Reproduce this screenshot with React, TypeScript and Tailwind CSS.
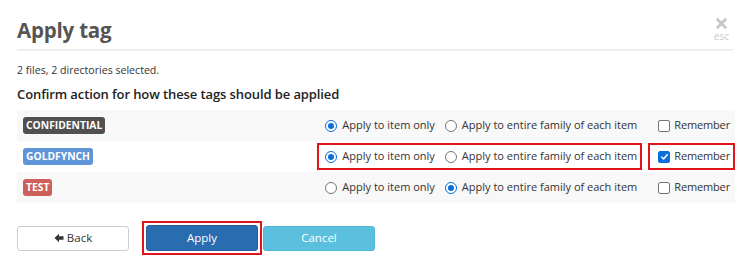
import { useState } from 'react';

type Row = {
  name: string;
  color: string;
  scope: 'item' | 'family';
  remember: boolean;
  highlight?: boolean;
};

const initialRows: Row[] = [
  { name: 'CONFIDENTIAL', color: 'bg-[#505050]', scope: 'item', remember: false },
  { name: 'GOLDFYNCH', color: 'bg-[#5f94d6]', scope: 'item', remember: true, highlight: true },
  { name: 'TEST', color: 'bg-[#cd605a]', scope: 'family', remember: false },
];

const Radio = ({ checked }: { checked: boolean }) => (
  <span
    className={`inline-flex items-center justify-center w-[12px] h-[12px] rounded-full border ${
      checked ? 'border-[#0a6fd8]' : 'border-[#767676]'
    } bg-white`}
  >
    {checked && <span className="w-[6px] h-[6px] rounded-full bg-[#0a6fd8]" />}
  </span>
);

const Checkbox = ({ checked }: { checked: boolean }) => (
  <span
    className={`inline-flex items-center justify-center w-[12px] h-[12px] rounded-[2px] border ${
      checked ? 'border-[#0a6fd8] bg-[#0a6fd8]' : 'border-[#767676] bg-white'
    }`}
  >
    {checked && (
      <svg width="9" height="9" viewBox="0 0 10 10">
        <path d="M1.5 5.2 L4 7.6 L8.6 2.4" fill="none" stroke="white" strokeWidth="1.6" />
      </svg>
    )}
  </span>
);

export default function App() {
  const [rows] = useState(initialRows);

  return (
    <div
      className="w-[750px] h-[266px] bg-white px-[17px] text-[#333]"
      style={{ fontFamily: '"Open Sans", "Liberation Sans", sans-serif' }}
    >
      {/* header */}
      <div className="flex justify-between items-start border-b-2 border-[#eeeeee] h-[51px] pt-[15px]">
        <h3 className="text-[20.5px] font-bold text-[#555] leading-[30px] tracking-[-0.2px]">Apply tag</h3>
        <div className="flex flex-col items-center mr-[4px] mt-[3px] text-[#c8c8c8]">
          <svg width="11" height="11" viewBox="0 0 12 12">
            <path d="M2 2 L10 10 M10 2 L2 10" stroke="#c8c8c8" strokeWidth="3.2" strokeLinecap="square" />
          </svg>
          <span className="text-[10px] leading-[12px] mt-[1px]">esc</span>
        </div>
      </div>

      <p className="text-[10.6px] mt-[12px] leading-[14px]">2 files, 2 directories selected.</p>
      <p className="text-[13px] font-semibold mt-[8px] leading-[18px] text-[#222] tracking-[-0.1px]">
        Confirm action for how these tags should be applied
      </p>

      {/* tag table */}
      <div className="mt-[7px] w-[718px] text-[11px]">
        {rows.map((row, i) => (
          <div
            key={row.name}
            className={`flex items-center h-[31px] pl-[6px] ${i % 2 === 0 ? 'bg-[#f8f8f8]' : 'bg-white'}`}
          >
            <span
              className={`${row.color} text-white text-[10.3px] font-bold leading-[13px] px-[3px] py-[2px] rounded-[3px]`}
            >
              {row.name}
            </span>
            <div className="flex-1" />
            <div
              className={`flex items-center h-[27px] pl-[6px] pr-[3px] border-2 ${
                row.highlight ? 'border-[#e0131e]' : 'border-transparent'
              }`}
            >
              <label className="flex items-center gap-[5px]">
                <Radio checked={row.scope === 'item'} />
                <span>Apply to item only</span>
              </label>
              <label className="flex items-center gap-[5px] ml-[10px]">
                <Radio checked={row.scope === 'family'} />
                <span>Apply to entire family of each item</span>
              </label>
            </div>
            <div
              className={`flex items-center h-[27px] ml-[6px] pl-[8px] pr-[3px] border-2 ${
                row.highlight ? 'border-[#e0131e]' : 'border-transparent'
              }`}
            >
              <label className="flex items-center gap-[4px]">
                <Checkbox checked={row.remember} />
                <span className="tracking-[-0.15px]">Remember</span>
              </label>
            </div>
          </div>
        ))}
      </div>

      {/* buttons */}
      <div className="flex items-center mt-[18px] text-[11.5px]">
        <button className="w-[112px] h-[25px] rounded-[3px] border border-[#ccc] bg-white text-[#333] flex items-center justify-center gap-[3px]">
          <svg width="10" height="10" viewBox="0 0 10 10">
            <path d="M0.5 5 L5 0.8 L5 3.2 L9.5 3.2 L9.5 6.8 L5 6.8 L5 9.2 Z" fill="#333" />
          </svg>
          Back
        </button>
        <div className="ml-[13px] p-[2px] border-2 border-[#e0131e]">
          <button className="w-[112px] h-[26px] rounded-[3px] bg-[#2a6cb0] border border-[#275f9e] text-white">
            Apply
          </button>
        </div>
        <button className="ml-[1px] w-[112px] h-[25px] rounded-[3px] bg-[#5bc0de] border border-[#52b8d6] text-white">
          Cancel
        </button>
      </div>
    </div>
  );
}
